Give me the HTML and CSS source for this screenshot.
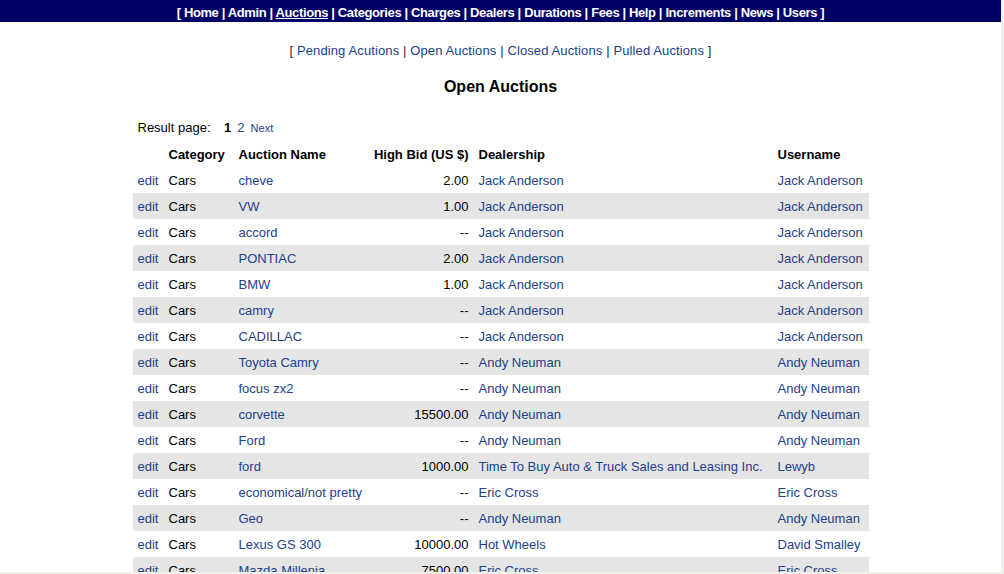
FILE: index.html
```html
<!DOCTYPE html>
<html>
<head>
<meta charset="utf-8">
<title>Open Auctions</title>
<link rel="stylesheet" href="styles.css">
</head>
<body>
<div class="frame">
  <div class="topnav">[ <a href="#">Home</a> | <a href="#">Admin</a> | <a href="#" class="current">Auctions</a> | <a href="#">Categories</a> | <a href="#">Charges</a> | <a href="#">Dealers</a> | <a href="#">Durations</a> | <a href="#">Fees</a> | <a href="#">Help</a> | <a href="#">Increments</a> | <a href="#">News</a> | <a href="#">Users</a> ]</div>

  <div class="subnav">[ <a href="#">Pending Acutions</a> | <a href="#">Open Auctions</a> | <a href="#">Closed Auctions</a> | <a href="#">Pulled Auctions</a> ]</div>

  <h1 class="title">Open Auctions</h1>

  <div class="listing">
    <div class="pager">Result page: <b class="pg-cur">1</b><a href="#" class="pg-num">2</a><a href="#" class="pg-next">Next</a></div>
    <table class="auctions">
      <colgroup>
        <col class="c-edit"><col class="c-cat"><col class="c-name"><col class="c-bid"><col class="c-deal"><col class="c-user">
      </colgroup>
      <thead>
        <tr><th></th><th>Category</th><th>Auction Name</th><th class="num">High Bid (US $)</th><th>Dealership</th><th>Username</th></tr>
      </thead>
      <tbody>
        <tr><td><a href="#">edit</a></td><td>Cars</td><td><a href="#">cheve</a></td><td class="num">2.00</td><td><a href="#">Jack Anderson</a></td><td><a href="#">Jack Anderson</a></td></tr>
        <tr><td><a href="#">edit</a></td><td>Cars</td><td><a href="#">VW</a></td><td class="num">1.00</td><td><a href="#">Jack Anderson</a></td><td><a href="#">Jack Anderson</a></td></tr>
        <tr><td><a href="#">edit</a></td><td>Cars</td><td><a href="#">accord</a></td><td class="num">--</td><td><a href="#">Jack Anderson</a></td><td><a href="#">Jack Anderson</a></td></tr>
        <tr><td><a href="#">edit</a></td><td>Cars</td><td><a href="#">PONTIAC</a></td><td class="num">2.00</td><td><a href="#">Jack Anderson</a></td><td><a href="#">Jack Anderson</a></td></tr>
        <tr><td><a href="#">edit</a></td><td>Cars</td><td><a href="#">BMW</a></td><td class="num">1.00</td><td><a href="#">Jack Anderson</a></td><td><a href="#">Jack Anderson</a></td></tr>
        <tr><td><a href="#">edit</a></td><td>Cars</td><td><a href="#">camry</a></td><td class="num">--</td><td><a href="#">Jack Anderson</a></td><td><a href="#">Jack Anderson</a></td></tr>
        <tr><td><a href="#">edit</a></td><td>Cars</td><td><a href="#">CADILLAC</a></td><td class="num">--</td><td><a href="#">Jack Anderson</a></td><td><a href="#">Jack Anderson</a></td></tr>
        <tr><td><a href="#">edit</a></td><td>Cars</td><td><a href="#">Toyota Camry</a></td><td class="num">--</td><td><a href="#">Andy Neuman</a></td><td><a href="#">Andy Neuman</a></td></tr>
        <tr><td><a href="#">edit</a></td><td>Cars</td><td><a href="#">focus zx2</a></td><td class="num">--</td><td><a href="#">Andy Neuman</a></td><td><a href="#">Andy Neuman</a></td></tr>
        <tr><td><a href="#">edit</a></td><td>Cars</td><td><a href="#">corvette</a></td><td class="num">15500.00</td><td><a href="#">Andy Neuman</a></td><td><a href="#">Andy Neuman</a></td></tr>
        <tr><td><a href="#">edit</a></td><td>Cars</td><td><a href="#">Ford</a></td><td class="num">--</td><td><a href="#">Andy Neuman</a></td><td><a href="#">Andy Neuman</a></td></tr>
        <tr><td><a href="#">edit</a></td><td>Cars</td><td><a href="#">ford</a></td><td class="num">1000.00</td><td><a href="#">Time To Buy Auto &amp; Truck Sales and Leasing Inc.</a></td><td><a href="#">Lewyb</a></td></tr>
        <tr><td><a href="#">edit</a></td><td>Cars</td><td><a href="#">economical/not pretty</a></td><td class="num">--</td><td><a href="#">Eric Cross</a></td><td><a href="#">Eric Cross</a></td></tr>
        <tr><td><a href="#">edit</a></td><td>Cars</td><td><a href="#">Geo</a></td><td class="num">--</td><td><a href="#">Andy Neuman</a></td><td><a href="#">Andy Neuman</a></td></tr>
        <tr><td><a href="#">edit</a></td><td>Cars</td><td><a href="#">Lexus GS 300</a></td><td class="num">10000.00</td><td><a href="#">Hot Wheels</a></td><td><a href="#">David Smalley</a></td></tr>
        <tr><td><a href="#">edit</a></td><td>Cars</td><td><a href="#">Mazda Millenia</a></td><td class="num">7500.00</td><td><a href="#">Eric Cross</a></td><td><a href="#">Eric Cross</a></td></tr>
      </tbody>
    </table>
  </div>
</div>
</body>
</html>
```

FILE: styles.css
```css
html, body {
  margin: 0;
  padding: 0;
  background: #ffffff;
}

body {
  font-family: "Liberation Sans", Arial, sans-serif;
  font-size: 13px;
  color: #000000;
}

body::after {
  content: "";
  position: fixed;
  top: 0;
  left: 0;
  right: 0;
  bottom: 0;
  border-right: 3px solid #f1f0ea;
  border-bottom: 2px solid #f1f0ea;
  pointer-events: none;
}

a {
  color: #22418c;
  text-decoration: none;
}

.frame {
  width: 1001px;
}

.topnav {
  box-sizing: border-box;
  background: #000066;
  color: #ffffff;
  font-weight: bold;
  text-align: center;
  height: 22px;
  padding-top: 3px;
  line-height: 19px;
  letter-spacing: -0.38px;
}

.topnav a {
  color: #ffffff;
}

.topnav a.current {
  text-decoration: underline;
}

.subnav {
  margin-top: 21px;
  line-height: 16px;
  text-align: center;
  color: #2a2a3c;
  letter-spacing: 0.12px;
}

.title {
  margin: 18px 0 0;
  font-size: 16px;
  font-weight: bold;
  line-height: 20px;
  text-align: center;
}

.listing {
  width: 736px;
  margin: 23px auto 0;
}

.pager {
  padding-left: 5px;
  line-height: 16px;
}

.pg-cur {
  margin-left: 10px;
}

.pg-num {
  margin-left: 6px;
}

.pg-next {
  margin-left: 6px;
  font-size: 11px;
}

.auctions {
  margin-top: 5px;
  width: 736px;
  table-layout: fixed;
  border-collapse: collapse;
}

.c-edit { width: 31px; }
.c-cat { width: 70px; }
.c-name { width: 135px; }
.c-bid { width: 105px; }
.c-deal { width: 299px; }
.c-user { width: 96px; }

.auctions th,
.auctions td {
  height: 26px;
  padding: 0 5px;
  text-align: left;
  white-space: nowrap;
  vertical-align: middle;
}

.auctions th {
  font-weight: bold;
}

.auctions .num {
  text-align: right;
}

.auctions tbody tr:nth-child(even) {
  background: #e5e5e5;
}
```
